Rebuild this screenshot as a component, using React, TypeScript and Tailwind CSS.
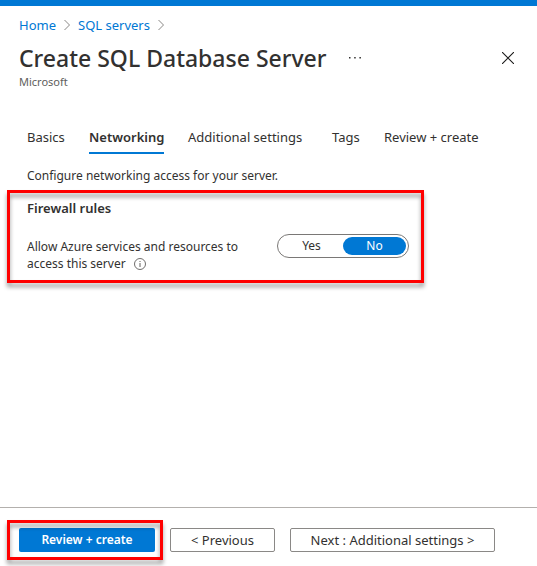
import { useState } from 'react';

const tabs = [
  { label: 'Basics', width: 'w-[62px]' },
  { label: 'Networking', width: 'w-[99px]' },
  { label: 'Additional settings', width: 'w-36' },
  { label: 'Tags', width: 'w-[52px]' },
  { label: 'Review + create', width: 'w-[120px]' },
];

function Chevron() {
  return (
    <svg aria-hidden="true" className="h-3 w-2" viewBox="0 0 8 12" fill="none" stroke="#8a8886">
      <path d="M1.5 1L6.5 6L1.5 11" />
    </svg>
  );
}

function Highlight() {
  return (
    <span
      aria-hidden="true"
      className="pointer-events-none absolute inset-0 border-3 border-[#ff0000] drop-shadow-[0_4px_2px_rgba(0,0,0,0.4)]"
    />
  );
}

export default function App() {
  const [active, setActive] = useState('Networking');
  const [allow, setAllow] = useState('No');

  return (
    <div className="flex min-h-screen flex-col bg-white font-['Noto_Sans',sans-serif] text-[13px] leading-[18px] text-[#323130]">
      <div className="h-1.5 bg-[#0078d4]" />
      <header className="px-[19px] pt-2.5">
        <nav aria-label="Breadcrumb" className="flex items-center gap-[7px] text-[#0078d4]">
          <a href="#home">Home</a>
          <Chevron />
          <a href="#servers">SQL servers</a>
          <Chevron />
        </nav>
        <div className="mt-2 flex h-8 items-center">
          <h1 className="whitespace-nowrap text-[23px] font-medium">Create SQL Database Server</h1>
          <button type="button" aria-label="More options" className="ml-4 flex h-5 w-6 items-center justify-center">
            <svg className="h-3 w-3" viewBox="0 0 12 12" fill="#323130">
              <path d="M0 5h1.5v1.5H0zM5.2 5h1.5v1.5H5.2zM10.4 5h1.5v1.5h-1.5z" />
            </svg>
          </button>
          <button type="button" aria-label="Close" className="ml-auto flex h-6 w-5 items-center justify-center">
            <svg className="h-3 w-3" viewBox="0 0 12 12" fill="none" stroke="#1b1a19" strokeWidth="1.1">
              <path d="M0 0L12 12M12 0L0 12" />
            </svg>
          </button>
        </div>
        <p className="text-[11px] leading-4 text-[#605e5c]">Microsoft</p>
      </header>

      <main className="flex-1 pt-9">
        <div role="tablist" className="flex px-[27px]">
          {tabs.map((tab) => (
            <div key={tab.label} className={`${tab.width} h-7 shrink-0`}>
              <button
                type="button"
                role="tab"
                aria-selected={active === tab.label}
                onClick={() => setActive(tab.label)}
                className={`h-7 border-b-2 pb-1 whitespace-nowrap ${
                  active === tab.label ? 'border-[#0078d4] font-semibold' : 'border-transparent'
                }`}
              >
                {tab.label}
              </button>
            </div>
          ))}
        </div>
        <p className="mt-3 px-[27px] text-xs leading-5">Configure networking access for your server.</p>

        <section className="relative mx-[7px] mt-1 max-w-[417px] pt-[9px] pr-3 pb-[11px] pl-5">
          <h2 className="font-semibold">Firewall rules</h2>
          <div className="mt-[17px] flex items-start text-xs">
            <div id="allow-label" className="w-[250px] pt-1 pr-6 leading-[17px]">
              Allow Azure services and resources to access this server
              <svg aria-hidden="true" className="ml-2 inline h-3 w-3 align-[-2px]" viewBox="0 0 12 12" fill="none" stroke="#605e5c">
                <circle cx="6" cy="6" r="5.5" strokeWidth="0.9" />
                <path d="M6 5v4M6 3v1" />
              </svg>
            </div>
            <div
              role="radiogroup"
              aria-labelledby="allow-label"
              className="flex h-6 w-[132px] shrink-0 rounded-full border border-[#7a7876] p-0.5"
            >
              {['Yes', 'No'].map((option) => (
                <label
                  key={option}
                  className={`flex flex-1 cursor-pointer items-center justify-center rounded-full ${
                    allow === option ? 'bg-[#0078d4] text-white' : ''
                  }`}
                >
                  <input
                    type="radio"
                    name="allow"
                    value={option}
                    checked={allow === option}
                    onChange={() => setAllow(option)}
                    className="sr-only"
                  />
                  {option}
                </label>
              ))}
            </div>
          </div>
          <Highlight />
        </section>
      </main>

      <footer className="flex items-start border-t border-[#b3b0ad] px-[7px] pt-3 pb-1.5">
        <div className="relative h-10 w-[156px] shrink-0 py-2 pr-2 pl-3">
          <button type="button" className="h-6 w-full rounded-xs bg-[#0078d4] text-xs leading-none font-semibold text-white">
            Review + create
          </button>
          <Highlight />
        </div>
        <button type="button" className="mt-2 ml-[7px] h-6 w-[105px] shrink-0 rounded-xs border border-[#8a8886] leading-none">
          &lt; Previous
        </button>
        <button type="button" className="mt-2 ml-[15px] h-6 w-[205px] shrink-0 rounded-xs border border-[#8a8886] leading-none">
          Next : Additional settings &gt;
        </button>
      </footer>
    </div>
  );
}
